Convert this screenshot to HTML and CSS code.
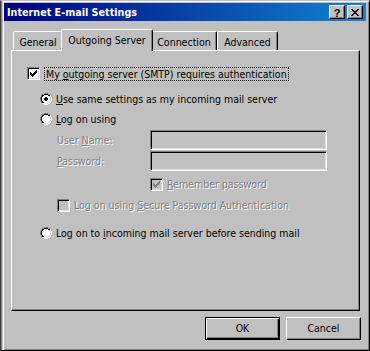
FILE: index.html
```html
<!DOCTYPE html>
<html>
<head>
<meta charset="utf-8">
<link rel="stylesheet" href="styles.css">
</head>
<body>
<svg class="defs" width="0" height="0" aria-hidden="true">
  <defs>
    <g id="radio" shape-rendering="crispEdges">
      <path fill="#808080" d="M4 0h4v1H4zM2 1h2v1H2zM8 1h2v1H8zM1 2h1v2H1zM0 4h1v4H0zM1 8h1v2H1z"/>
      <path fill="#ffffff" d="M10 2h1v2h-1zM11 4h1v4h-1zM10 8h1v2h-1zM8 10h2v1H8zM2 10h2v1H2zM4 11h4v1H4z"/>
      <path fill="#000000" d="M4 1h4v1H4zM2 2h2v1H2zM8 2h2v1H8zM2 3h1v1H2zM1 4h1v4H1zM2 8h1v1H2zM2 9h2v1H2z"/>
      <path fill="#dfdfdf" d="M9 3h1v1H9zM10 4h1v4h-1zM9 8h1v1H9zM8 9h2v1H8zM4 10h4v1H4z"/>
      <path fill="#ffffff" d="M4 2h4v1H4zM3 3h6v1H3zM2 4h8v4H2zM3 8h6v1H3zM4 9h4v1H4z"/>
    </g>
    <g id="check" shape-rendering="crispEdges">
      <path d="M0 2h1v3H0zM1 3h1v3H1zM2 4h1v3H2zM3 3h1v3H3zM4 2h1v3H4zM5 1h1v3H5zM6 0h1v3H6z"/>
    </g>
  </defs>
</svg>

<div class="window">
  <div class="caption">
    <span class="title">Internet E-mail Settings</span>
    <div class="caption-buttons">
      <span class="cbtn help">?</span>
      <span class="cbtn close">
        <svg width="8" height="7" viewBox="0 0 8 7" shape-rendering="crispEdges"><path d="M0 0h2v1H0zM6 0h2v1H6zM1 1h2v1H1zM5 1h2v1H5zM2 2h4v1H2zM3 3h2v1H3zM2 4h4v1H2zM1 5h2v1H1zM5 5h2v1H5zM0 6h2v1H0zM6 6h2v1H6z"/></svg>
      </span>
    </div>
  </div>

  <div class="client">
    <div class="tabs">
      <div class="tab t-general">General</div>
      <div class="tab active t-outgoing">Outgoing Server</div>
      <div class="tab t-connection">Connection</div>
      <div class="tab t-advanced">Advanced</div>
    </div>

    <div class="panel">
      <div class="row row-auth">
        <span class="checkbox"><svg class="tick" width="7" height="7" viewBox="0 0 7 7"><use href="#check"/></svg></span>
        <span class="focus-label">My <u>o</u>utgoing server (SMTP) requires authentication</span>
      </div>

      <div class="row row-radio row-same">
        <svg class="radio" width="12" height="12" viewBox="0 0 12 12"><use href="#radio"/><path class="dot" shape-rendering="crispEdges" d="M5 4h2v1H5zM4 5h4v2H4zM5 7h2v1H5z"/></svg>
        <span class="label"><u>U</u>se same settings as my incoming mail server</span>
      </div>

      <div class="row row-radio row-logon">
        <svg class="radio" width="12" height="12" viewBox="0 0 12 12"><use href="#radio"/></svg>
        <span class="label"><u>L</u>og on using</span>
      </div>

      <div class="fields">
        <span class="flabel disabled">User <u>N</u>ame:</span>
        <span class="field"></span>
        <span class="flabel disabled"><u>P</u>assword:</span>
        <span class="field"></span>
      </div>

      <div class="row row-remember">
        <span class="checkbox off"><svg class="tick grey" width="7" height="7" viewBox="0 0 7 7"><use href="#check"/></svg></span>
        <span class="label disabled"><u>R</u>emember password</span>
      </div>

      <div class="row row-spa">
        <span class="checkbox off"></span>
        <span class="label disabled">Log on using <u>S</u>ecure Password Authentication</span>
      </div>

      <div class="row row-radio row-before">
        <svg class="radio" width="12" height="12" viewBox="0 0 12 12"><use href="#radio"/></svg>
        <span class="label">Log on to <u>i</u>ncoming mail server before sending mail</span>
      </div>
    </div>

    <div class="buttons">
      <button class="btn default">OK</button>
      <button class="btn">Cancel</button>
    </div>
  </div>
</div>
</body>
</html>
```

FILE: styles.css
```css
* { box-sizing: border-box; }

html, body {
  margin: 0;
  padding: 0;
}

body {
  width: 370px;
  height: 351px;
  overflow: hidden;
  background: #c0c0c0;
  font-family: "DejaVu Sans Condensed", "Liberation Sans", sans-serif;
  font-size: 10.5px;
  line-height: 13px;
  color: #000;
}

.defs {
  position: absolute;
  width: 0;
  height: 0;
}

/* window frame */
.window {
  width: 370px;
  height: 351px;
  background: #c0c0c0;
  border: 1px solid;
  border-color: #c0c0c0 #000 #000 #404040;
  box-shadow:
    inset 1px 0 #808080,
    inset 2px 0 #c0c0c0,
    inset 3px 0 #fff,
    inset 0 1px #fff,
    inset -1px -1px #808080;
  padding: 2px 3px 2px 3px;
  display: flex;
  flex-direction: column;
}

/* caption */
.caption {
  height: 18px;
  flex: none;
  background: linear-gradient(to right, #000080, #1084d0);
  display: flex;
  align-items: center;
  justify-content: space-between;
  padding-left: 3px;
}

.title {
  color: #fff;
  font-weight: bold;
  font-size: 10.7px;
  line-height: 13px;
}

.caption-buttons {
  display: flex;
  gap: 2px;
  margin-right: 3px;
}

.cbtn {
  width: 16px;
  height: 14px;
  background: #c0c0c0;
  border: 1px solid;
  border-color: #fff #000 #000 #fff;
  box-shadow: inset -1px -1px #808080;
  display: flex;
  align-items: center;
  justify-content: center;
}

.help {
  font-family: "Liberation Sans", sans-serif;
  font-weight: bold;
  font-size: 11px;
  line-height: 10px;
  padding-top: 1px;
}

.close svg {
  display: block;
}

/* client area */
.client {
  flex: 1;
  display: flex;
  flex-direction: column;
}

.tabs {
  display: flex;
  align-items: flex-end;
  height: 21px;
  margin-top: 8px;
  padding-left: 9px;
}

.tab {
  height: 19px;
  background: #c0c0c0;
  border: 1px solid;
  border-bottom: none;
  border-color: #fff #000 transparent #fff;
  border-radius: 2px 2px 0 0;
  box-shadow: inset -1px 0 #808080;
  display: flex;
  align-items: center;
  justify-content: center;
  padding-top: 2px;
  white-space: nowrap;
}

.t-general { width: 50px; }
.t-connection { width: 66px; }
.t-advanced { width: 61px; }

.tab.active {
  width: 92px;
  height: 22px;
  margin: 0 -2px -1px -2px;
  position: relative;
  z-index: 1;
  padding-top: 0;
  padding-bottom: 1px;
}

.panel {
  height: 261px;
  margin: 0 6px 0 7px;
  border: 1px solid;
  border-color: #fff #000 #000 #fff;
  box-shadow: inset -1px -1px #808080;
  padding: 16px 0 0 15px;
  display: flex;
  flex-direction: column;
  align-items: flex-start;
}

.row {
  display: flex;
  align-items: center;
  white-space: nowrap;
}

.row-auth { height: 13px; }

.row-radio {
  height: 12px;
  margin-left: 13px;
}

.row-same { margin-top: 13px; }
.row-logon { margin-top: 8px; }
.row-before { margin-top: 15px; }

.row-remember {
  height: 13px;
  margin-top: 7px;
  margin-left: 123px;
}

.row-spa {
  height: 13px;
  margin-top: 8px;
  margin-left: 30px;
}

.radio { display: block; flex: none; }

.row-radio .label { margin-left: 4px; }
.row-remember .label,
.row-spa .label { margin-left: 4px; }

/* checkbox */
.checkbox {
  width: 13px;
  height: 13px;
  flex: none;
  background: #fff;
  border: 1px solid;
  border-color: #808080 #fff #fff #808080;
  box-shadow: inset 1px 1px #000, inset -1px -1px #dfdfdf;
  padding: 2px;
  display: block;
}

.checkbox.off { background: #c0c0c0; }

.tick {
  display: block;
  fill: #000;
}

.tick.grey { fill: #808080; }

.focus-label {
  margin-left: 4px;
  height: 14px;
  line-height: 12px;
  padding: 0 1px;
  border: 1px dotted #000;
}

.disabled {
  color: #808080;
  text-shadow: 1px 1px 0 #fff;
}

/* fields */
.fields {
  display: grid;
  grid-template-columns: 93px 177px;
  grid-auto-rows: 20px;
  row-gap: 1px;
  margin-top: 5px;
  margin-left: 30px;
  align-items: center;
}

.field {
  height: 20px;
  background: #c0c0c0;
  border: 1px solid;
  border-color: #808080 #fff #fff #808080;
  box-shadow: inset 1px 1px #000, inset -1px -1px #dfdfdf;
}

/* buttons */
.buttons {
  display: flex;
  justify-content: flex-end;
  gap: 6px;
  margin-top: 6px;
  padding-right: 5px;
}

.btn {
  width: 75px;
  height: 23px;
  margin: 0;
  padding: 0;
  font: inherit;
  color: #000;
  background: #c0c0c0;
  border: 1px solid;
  border-color: #fff #000 #000 #fff;
  box-shadow: inset -1px -1px #808080;
  border-radius: 0;
}

.btn.default {
  border-color: #000;
  box-shadow: inset 1px 1px #fff, inset -1px -1px #000, inset -2px -2px #808080;
}
```
